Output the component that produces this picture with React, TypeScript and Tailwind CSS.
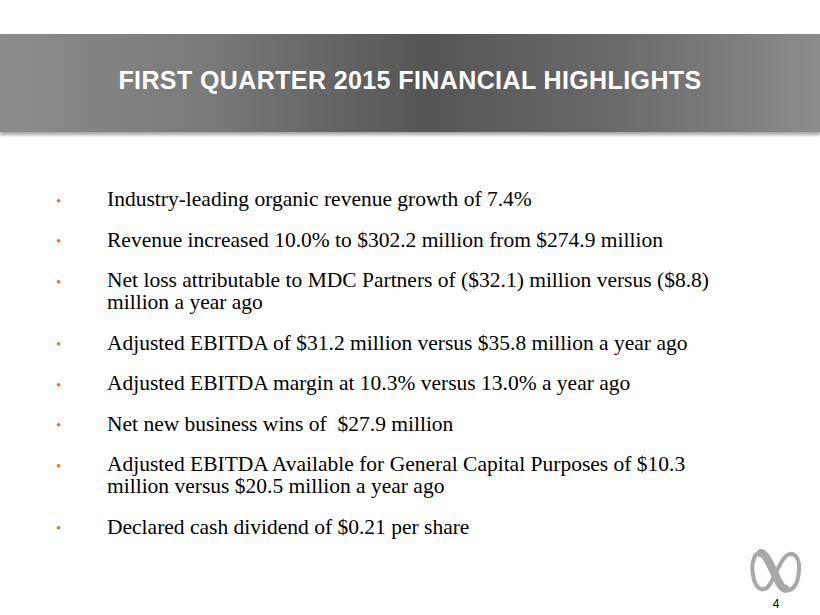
const items: string[][] = [
  ["Industry-leading organic revenue growth of 7.4%"],
  ["Revenue increased 10.0% to $302.2 million from $274.9 million"],
  ["Net loss attributable to MDC Partners of ($32.1) million versus ($8.8)", "million a year ago"],
  ["Adjusted EBITDA of $31.2 million versus $35.8 million a year ago"],
  ["Adjusted EBITDA margin at 10.3% versus 13.0% a year ago"],
  ["Net new business wins of  $27.9 million"],
  ["Adjusted EBITDA Available for General Capital Purposes of $10.3", "million versus $20.5 million a year ago"],
  ["Declared cash dividend of $0.21 per share"],
];

function Logo() {
  return (
    <svg width="52" height="48" viewBox="0 0 52 46" preserveAspectRatio="none">
      <path
        d="M12 4 C4 4 1 14 3 26 C5 38 11 42 17 38 C23 34 29 12 37 7 C44 3 50 9 49 22 C48 36 42 42 35 40 C27 38 21 5 12 4 Z"
        fill="none"
        stroke="#a8a8a8"
        strokeWidth="4"
        strokeLinejoin="round"
      />
      <path d="M11 5 C20 6 27 38 35 39" fill="none" stroke="#a8a8a8" strokeWidth="8" strokeLinecap="round" />
    </svg>
  );
}

export default function App() {
  return (
    <div className="relative h-[615px] w-[820px] overflow-hidden bg-white">
      <div className="pt-[34px]">
        <div className="flex h-[98px] w-full items-center justify-center bg-[linear-gradient(to_right,#8c8c8c_0%,#7a7a7a_25%,#555555_52%,#6a6a6a_75%,#8c8c8c_100%)] pb-[6px] shadow-[0_3px_3px_rgba(0,0,0,0.35)]">
          <h1 className="text-[25px] leading-none font-bold tracking-[0.4px] text-white [font-family:'Liberation_Sans',Arial,sans-serif]">
            FIRST QUARTER 2015 FINANCIAL HIGHLIGHTS
          </h1>
        </div>
      </div>
      <ul className="mt-[56px] flex flex-col gap-[18.5px] pl-[56px] text-[21.5px] leading-[22px] text-black [font-family:'Liberation_Serif','Times_New_Roman',serif]">
        {items.map((lines, i) => (
          <li key={i} className="flex items-start">
            <span className="flex h-[22px] w-[51px] shrink-0 items-center pt-[4px] text-[15px] leading-none text-[#e2782f]">•</span>
            <span>
              {lines.map((l, j) => (
                <div key={j} className="whitespace-pre">{l}</div>
              ))}
            </span>
          </li>
        ))}
      </ul>
      <div className="absolute right-[18px] bottom-[5px] flex flex-col items-center">
        <Logo />
        <span className="mt-[2px] text-[12px] leading-none text-black [font-family:'Liberation_Sans',Arial,sans-serif]">4</span>
      </div>
    </div>
  );
}
